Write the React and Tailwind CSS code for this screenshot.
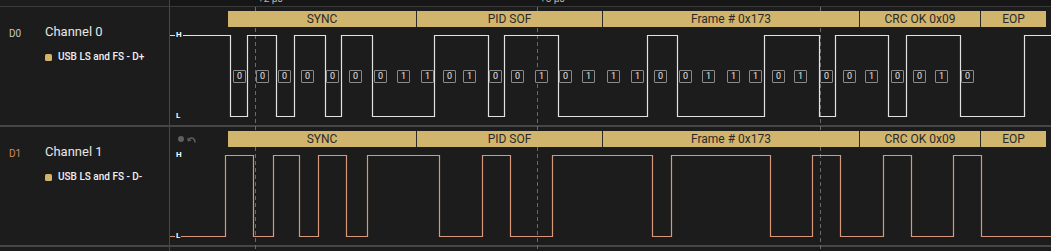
import React from 'react';

const CANVAS_X = 170;
const CANVAS_W = 881;
const HI = 28.5;
const LO = 109.5;

const SEGMENTS = [
  { label: 'SYNC', w: 188 },
  { label: 'PID SOF', w: 186 },
  { label: 'Frame # 0x173', w: 257 },
  { label: 'CRC OK 0x09', w: 121 },
  { label: 'EOP', w: 66 },
];

// decoded bits: [left x on the page, value]
const BITS = [
  [233, 0], [256, 0], [278, 0], [301, 0], [326, 0], [349, 0], [374, 0], [397, 1],
  [421, 1], [443, 0], [463, 1], [489, 0], [511, 0], [535, 1], [559, 0], [582, 1],
  [607, 1], [631, 1], [654, 0], [679, 0], [702, 1], [727, 1], [749, 1], [772, 0],
  [794, 1], [820, 0], [843, 0], [865, 1], [891, 0], [913, 0], [935, 1], [961, 0],
];

const CURSORS = [255, 537, 820];

const CHANNELS = [
  {
    id: 'D0',
    idClass: 'text-[#c9c9c9]',
    name: 'Channel 0',
    sub: 'USB LS and FS - D+',
    stroke: '#e2e2e2',
    startHigh: true,
    edges: [230, 247, 276, 294, 325, 341, 372, 434, 488, 504, 558, 647, 677, 764, 819, 835, 888, 906, 960, 1024],
    showBits: true,
    showIcons: false,
  },
  {
    id: 'D1',
    idClass: 'text-[#d48a5c]',
    name: 'Channel 1',
    sub: 'USB LS and FS - D-',
    stroke: '#d8977b',
    startHigh: false,
    edges: [225, 253, 273, 299, 318, 346, 367, 439, 482, 510, 552, 652, 671, 770, 812, 840, 883, 911, 953, 981],
    showBits: false,
    showIcons: true,
  },
];

function wavePath(edges, startHigh) {
  let high = startHigh;
  let d = `M0 ${high ? HI : LO}`;
  for (const e of edges) {
    d += ` H${e - CANVAS_X + 0.5}`;
    high = !high;
    d += ` V${high ? HI : LO}`;
  }
  return d + ` H${CANVAS_W}`;
}

function UndoIcon() {
  return (
    <svg width="10" height="8" viewBox="0 0 10 8" fill="none">
      <path d="M9 7.5 C9 3.5 6 1.8 3.2 4" stroke="#5f5f5f" strokeWidth="1.6" />
      <path d="M1.2 2.4 L1.8 6.6 L5.6 5.6 Z" fill="#5f5f5f" />
    </svg>
  );
}

function ChannelRow({ ch }) {
  return (
    <div className="flex h-[118px]">
      <div className="flex w-[170px] shrink-0 border-r border-[#474747] pl-[9px] pt-[18px]">
        <div className={`w-[36px] pt-[4px] text-[10px] leading-[10px] ${ch.idClass}`}>{ch.id}</div>
        <div className="flex flex-col">
          <div className="text-[13px] leading-[13px] text-[#e6e6e6]">{ch.name}</div>
          <div className="mt-[14px] flex items-center gap-[6px]">
            <span className="h-[7px] w-[7px] rounded-[1.5px] bg-[#d3b46b]" />
            <span className="text-[10px] font-medium leading-[10px] text-[#f0f0f0]">{ch.sub}</span>
          </div>
        </div>
      </div>

      <div className="relative flex-1">
        <svg className="absolute inset-0" width={CANVAS_W} height="118">
          <path d={wavePath(ch.edges, ch.startHigh)} stroke={ch.stroke} strokeWidth="1.2" fill="none" />
        </svg>

        <div className="relative mt-[4px] flex h-[16px]">
          <div className="flex w-[58px] items-center gap-[2px] pl-[8px]">
            {ch.showIcons && (
              <>
                <span className="h-[6px] w-[6px] rounded-full bg-[#5f5f5f]" />
                <UndoIcon />
              </>
            )}
          </div>
          {SEGMENTS.map((s, i) => (
            <div
              key={s.label}
              style={{ width: s.w }}
              className={`flex items-center justify-center bg-[#d2b56d] text-[12px] leading-none text-[#2a2a2a] ${
                i > 0 ? 'border-l border-[#2a2a2a]' : ''
              }`}
            >
              {s.label}
            </div>
          ))}
        </div>

        <span className="absolute left-[5px] top-[24px] bg-[#1c1c1c] px-[1px] text-[8px] font-bold leading-[8px] text-white">H</span>
        <span className="absolute left-[5px] top-[105px] bg-[#1c1c1c] px-[1px] text-[8px] font-bold leading-[8px] text-white">L</span>

        {ch.showBits &&
          BITS.map(([x, v], i) => (
            <div
              key={i}
              style={{ left: x - CANVAS_X }}
              className="absolute top-[63px] flex h-[13px] w-[13px] items-center justify-center rounded-[1px] border border-[#8a8a8a] bg-[#1c1c1c] text-[9px] leading-none text-[#e6e6e6]"
            >
              {v}
            </div>
          ))}
      </div>
    </div>
  );
}

export default function App() {
  return (
    <div className="relative flex h-[251px] w-[1051px] flex-col overflow-hidden bg-[#1c1c1c] font-['Roboto',sans-serif]">
      <svg className="absolute left-[170px] top-0" width={CANVAS_W} height="251">
        {CURSORS.map((x) => (
          <line
            key={x}
            x1={x - CANVAS_X + 0.5}
            x2={x - CANVAS_X + 0.5}
            y1="0"
            y2="251"
            stroke="#6a6a6a"
            strokeWidth="1"
            strokeDasharray="4 3"
          />
        ))}
      </svg>

      <div className="flex h-[7px] shrink-0 border-b border-[#3a3a3a]">
        <div className="w-[170px] border-r border-[#474747]" />
        <div className="relative flex-1 overflow-hidden bg-[#161616]">
          <span className="absolute left-[88px] top-[-9px] text-[10px] text-[#b5b5b5]">+2 µs</span>
          <span className="absolute left-[370px] top-[-9px] text-[10px] text-[#b5b5b5]">+8 µs</span>
        </div>
      </div>

      <ChannelRow ch={CHANNELS[0]} />
      <div className="h-[2px] shrink-0 bg-[#464646]" />
      <ChannelRow ch={CHANNELS[1]} />
      <div className="h-[2px] shrink-0 bg-[#464646]" />

      <div className="flex flex-1">
        <div className="w-[170px] border-r border-[#474747]" />
        <div className="flex-1" />
      </div>
    </div>
  );
}
